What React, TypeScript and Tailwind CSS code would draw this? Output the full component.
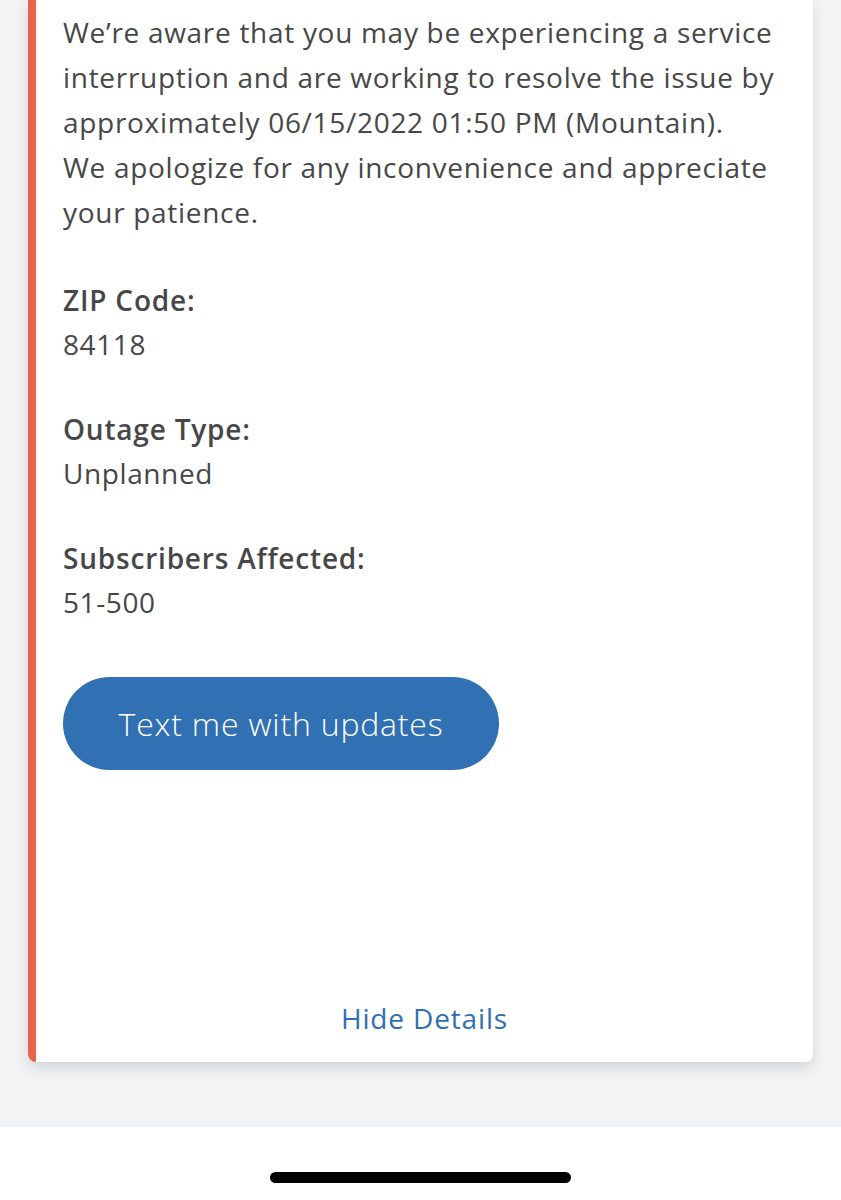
import React from "react";

export default function App() {
  const font = { fontFamily: '"Open Sans", "Noto Sans", sans-serif' };
  return (
    <div className="w-[841px] h-[1200px] bg-[#f2f3f5] flex flex-col overflow-hidden" style={font}>
      <div className="px-[28px]">
        <div className="bg-white border-l-[8px] border-[#e8634f] rounded-b-[8px] shadow-[0_6px_14px_rgba(0,0,0,0.12)] h-[1062px] flex flex-col">
          <div className="pl-[27px] pr-[30px] pt-[10px] text-[#474747] flex flex-col">
            <p className="text-[28px] leading-[45px] tracking-[0.7px]">
              We’re aware that you may be experiencing a service interruption and are working to resolve the issue by approximately 06/15/2022 01:50 PM (Mountain).
              <br />
              We apologize for any inconvenience and appreciate your patience.
            </p>
            <div className="mt-[43px] flex flex-col gap-[41px]">
              <div className="flex flex-col">
                <span className="text-[28px] leading-[44px] font-semibold tracking-[0.8px]">ZIP Code:</span>
                <span className="text-[28px] leading-[44px] tracking-[0.6px]">84118</span>
              </div>
              <div className="flex flex-col">
                <span className="text-[28px] leading-[44px] font-semibold tracking-[0.8px]">Outage Type:</span>
                <span className="text-[28px] leading-[44px] tracking-[0.6px]">Unplanned</span>
              </div>
              <div className="flex flex-col">
                <span className="text-[28px] leading-[44px] font-semibold tracking-[0.8px]">Subscribers Affected:</span>
                <span className="text-[28px] leading-[44px] tracking-[0.6px]">51-500</span>
              </div>
            </div>
            <button className="mt-[53px] w-[436px] h-[93px] rounded-full bg-[#3170b3] text-white text-[32px] font-light tracking-[0.8px] flex items-center justify-center">
              Text me with updates
            </button>
          </div>
          <div className="flex-1" />
          <div className="flex justify-center pb-[24px]">
            <span className="text-[28px] leading-[40px] text-[#2f6fb1] tracking-[0.85px]">Hide Details</span>
          </div>
        </div>
      </div>
      <div className="h-[65px]" />
      <div className="flex-1 bg-white flex justify-center pt-[45px]">
        <div className="w-[301px] h-[11px] rounded-full bg-black" />
      </div>
    </div>
  );
}
